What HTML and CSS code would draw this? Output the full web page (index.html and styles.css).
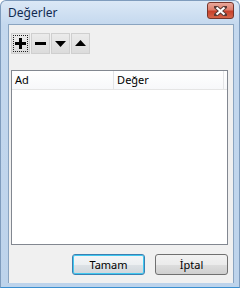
FILE: index.html
```html
<!DOCTYPE html>
<html>
<head>
  <meta charset="UTF-8">
  <title>Değerler</title>
  <link rel="stylesheet" href="styles.css">
</head>
<body>
  <div class="window">
    <div class="titlebar">
      <span class="title">Değerler</span>
      <span class="close">
        <svg width="13" height="10" viewBox="0 0 13 10">
          <path d="M2 1 L11 9 M11 1 L2 9" stroke="#5a3a35" stroke-width="4" stroke-linecap="square"/>
          <path d="M2.5 1.5 L10.5 8.5 M10.5 1.5 L2.5 8.5" stroke="#fff" stroke-width="2.2"/>
        </svg>
      </span>
    </div>
    <div class="client">
      <!-- add / remove / move buttons -->
      <div class="toolbar">
        <button class="tool focused">
          <svg width="11" height="11" viewBox="0 0 11 11"><path d="M4 0h3v4h4v3h-4v4h-3v-4h-4v-3h4z" fill="#000"/></svg>
        </button>
        <button class="tool">
          <svg width="11" height="11" viewBox="0 0 11 11"><path d="M0 4h11v3h-11z" fill="#000"/></svg>
        </button>
        <button class="tool">
          <svg width="11" height="11" viewBox="0 0 11 11"><path d="M0 3h11l-5.5 6z" fill="#000"/></svg>
        </button>
        <button class="tool">
          <svg width="11" height="11" viewBox="0 0 11 11"><path d="M0 8h11l-5.5-6z" fill="#000"/></svg>
        </button>
      </div>
      <div class="list">
        <div class="list-header">
          <div class="col col-name">Ad</div>
          <div class="col col-value">Değer</div>
          <div class="col col-rest"></div>
        </div>
      </div>
      <div class="actions">
        <button class="btn default">Tamam</button>
        <button class="btn">İptal</button>
      </div>
    </div>
  </div>
</body>
</html>
```

FILE: styles.css
```css
body {
  margin: 0;
  font-family: "Noto Sans", "DejaVu Sans", sans-serif;
  font-size: 11px;
  color: #000;
}
.window {
  width: 240px;
  height: 288px;
  box-sizing: border-box;
  display: flex;
  flex-direction: column;
  padding: 0 5px 4px 7px;
  background: linear-gradient(to bottom, #dbe8f6 0px, #c4d8ee 24px, #bdd3eb 100%);
  border: 1px solid #7f9cbd;
  border-bottom-color: #3b8fd0;
  border-radius: 6px 6px 0 0;
}
.titlebar {
  height: 23px;
  display: flex;
  align-items: center;
  justify-content: space-between;
}
.title {
  font-size: 12px;
  color: #102a50;
  margin-top: -1px;
}
.close {
  width: 27px;
  height: 17px;
  box-sizing: border-box;
  margin-top: -4px;
  display: flex;
  align-items: center;
  justify-content: center;
  border: 1px solid #76352b;
  border-radius: 3px;
  background: linear-gradient(to bottom, #e9a89b 0%, #de7e6c 45%, #c8412b 55%, #d5664a 100%);
}
.client {
  flex: 1;
  display: flex;
  flex-direction: column;
  background: #f0f0f0;
  padding: 8px 5px 0 2px;
  border: 1px solid #8aa4c0;
  border-bottom: none;
}
.toolbar {
  display: flex;
  gap: 1px;
}
.tool {
  width: 19px;
  height: 21px;
  padding: 0;
  display: flex;
  align-items: center;
  justify-content: center;
  border: 1px solid #cfcfcf;
  background: linear-gradient(to bottom, #ebebeb, #dcdcdc);
}
.tool.focused {
  outline: 1px dotted #222;
  outline-offset: -3px;
}
.list {
  height: 173px;
  margin-top: 16px;
  background: #fff;
  border: 1px solid #828790;
}
.list-header {
  height: 18px;
  display: flex;
  border-bottom: 1px solid #e5e5e5;
  background: linear-gradient(to bottom, #ffffff, #f7f8fa);
}
.col {
  padding: 1px 0 0 3px;
  border-right: 1px solid #e3e4e6;
}
.col-name {
  width: 101px;
}
.col-value {
  width: 109px;
}
.col-rest {
  flex: 1;
  border-right: none;
}
.actions {
  display: flex;
  justify-content: flex-end;
  gap: 10px;
  margin-top: 9px;
}
.btn {
  width: 73px;
  height: 21px;
  padding: 0;
  font-family: "Noto Sans", "DejaVu Sans", sans-serif;
  font-size: 11px;
  border: 1px solid #707070;
  border-radius: 3px;
  background: linear-gradient(to bottom, #f2f2f2 0%, #ebebeb 50%, #dddddd 51%, #cfcfcf 100%);
}
.btn.default {
  border-color: #3c7fb1;
  box-shadow: inset 0 0 0 1px #40c8f0;
  background: linear-gradient(to bottom, #f4f6f8 0%, #eceff1 50%, #dde2e6 51%, #d0d6db 100%);
}
```
